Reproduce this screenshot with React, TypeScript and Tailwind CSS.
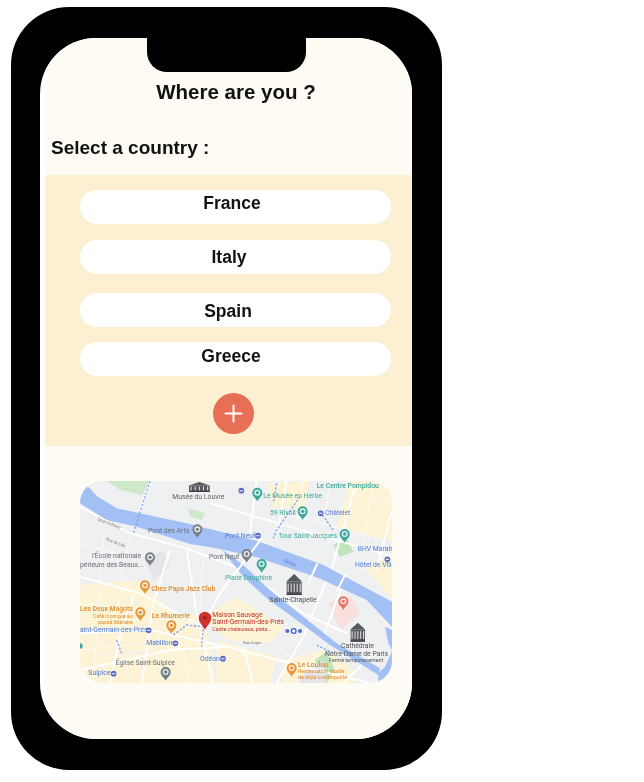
import React from "react";

const font = "font-['Liberation_Sans',Arial,sans-serif]";

const countries = [
  { name: "France", cls: "mt-[15px] pb-[7px] pr-[7px]" },
  { name: "Italy", cls: "mt-[16px] pr-[13px] pt-[1px]" },
  { name: "Spain", cls: "mt-[19px] pr-[15px] pt-[3px]" },
  { name: "Greece", cls: "mt-[15px] pr-[9px] pb-[5px]" },
];

function Pin({ x, y, fill }: { x: number; y: number; fill: string }) {
  return (
    <g transform={`translate(${x} ${y})`}>
      <path d="M0 20 C-3 12 -15 6 -15 -6 A15 15 0 1 1 15 -6 C15 6 3 12 0 20Z" fill={fill} />
      <circle cx="0" cy="-6" r="9" fill="#fff" opacity="0.85" />
      <circle cx="0" cy="-6" r="5" fill={fill} />
    </g>
  );
}

function Metro({ x, y }: { x: number; y: number }) {
  return (
    <g>
      <circle cx={x} cy={y} r="8.5" fill="#5a6ac8" />
      <rect x={x - 5} y={y - 2} width="10" height="4" fill="#fff" opacity="0.75" />
    </g>
  );
}

function Monument({ x, y, w, h }: { x: number; y: number; w: number; h: number }) {
  const bars = [0.1, 0.3, 0.5, 0.7, 0.9];
  return (
    <g>
      <rect x={x} y={y + h * 0.35} width={w} height={h * 0.65} fill="#55585c" />
      <path d={`M${x} ${y + h * 0.35} L${x + w / 2} ${y} L${x + w} ${y + h * 0.35}Z`} fill="#55585c" />
      {bars.map((b) => (
        <rect key={b} x={x + w * b - 1.5} y={y + h * 0.45} width="3" height={h * 0.4} fill="#e8e8ea" />
      ))}
      <rect x={x} y={y + h - 4} width={w} height="4" fill="#3e4145" />
    </g>
  );
}

function MapArt() {
  const roads = [
    "M30 110 L180 190 L350 235 L520 300 L700 430 L830 490",
    "M30 490 L240 480 L470 530 L700 590 L900 639",
    "M300 240 L250 400 L215 639",
    "M350 240 L380 430 L430 639",
    "M575 205 L450 370 L395 470",
    "M855 50 L790 280 L700 500 L620 639",
    "M830 310 L760 500",
    "M30 600 L300 540 L470 530",
    "M30 320 L210 370 L400 470",
    "M240 33 L190 190",
    "M420 100 L970 260",
    "M650 33 L620 190",
    "M966 120 L920 300",
    "M560 33 L540 190",
    "M120 639 L150 500 L190 380",
    "M520 530 L550 639",
    "M820 639 L900 560",
  ];
  const thin = [
    "M30 400 L200 420",
    "M30 540 L210 520",
    "M90 350 L70 639",
    "M160 350 L130 440",
    "M250 440 L380 460",
    "M300 420 L290 639",
    "M340 540 L360 639",
    "M100 200 L90 340",
    "M180 200 L150 330",
    "M30 220 L170 260",
    "M400 250 L390 420",
    "M480 390 L580 500",
    "M560 540 L620 440",
    "M640 130 L900 200",
    "M700 33 L680 150",
    "M780 33 L760 170",
    "M910 33 L880 230",
    "M800 60 L966 100",
    "M700 600 L770 520",
    "M620 540 L760 600",
  ];
  const blocks = [
    "M30 345 L200 330 L300 420 L260 540 L30 560Z",
    "M250 420 L400 440 L440 639 L215 639Z",
    "M30 560 L215 550 L215 639 L30 639Z",
    "M440 510 L620 560 L600 639 L440 639Z",
    "M640 570 L760 540 L850 600 L850 639 L640 639Z",
    "M400 440 L500 380 L640 470 L600 520 L470 510Z",
    "M840 33 L966 33 L966 215 L800 170Z",
    "M590 40 L720 33 L700 120 L610 110Z",
    "M880 290 L966 250 L966 390Z",
  ];
  return (
    <svg viewBox="30 33 936 606" className="block w-[312px] h-[202px] rounded-[22px] blur-[0.4px]" fontFamily="Roboto, 'Liberation Sans', sans-serif">
      <rect x="30" y="33" width="936" height="606" fill="#eff0f2" />
      {blocks.map((d, i) => (
        <path key={i} d={d} fill="#fdf3d6" />
      ))}
      <path d="M110 33 L240 33 L215 75 L150 60Z" fill="#cfe8c8" />
      <path d="M355 115 L405 130 L395 150 L360 140Z" fill="#cfe8c8" />
      <path d="M790 225 L830 205 L850 245 L810 260Z" fill="#bfe3bb" />
      <path d="M770 640 L735 570 L770 545 L795 600Z" fill="#bfe3bb" />
      <path d="M225 270 L280 240 L300 290 L250 330Z" fill="#e3e5e9" />
      <path d="M775 400 L840 378 L872 430 L812 480Z" fill="#f8e0dc" />
      <path d="M690 620 L760 570 L770 639 L690 639Z" fill="#e3e5e9" />
      {thin.map((d, i) => (
        <path key={i} d={d} stroke="#fff" strokeWidth="2.5" fill="none" opacity="0.8" />
      ))}
      {roads.map((d, i) => (
        <path key={i} d={d} stroke="#fff" strokeWidth="6" fill="none" />
      ))}
      <path
        d="M30 50 L55 50 L80 78 L140 115 L350 160 L560 212 L760 285 L890 355 L966 395 L966 470 L890 390 L740 322 L560 262 L440 235 L360 222 L200 170 L110 150 L30 100Z"
        fill="#a3c0f5"
      />
      <path d="M455 238 L520 285 L600 360 L700 440 L800 520 L930 595 L925 615 L780 525 L680 450 L590 385 L520 320Z" fill="#a3c0f5" />
      <path d="M945 470 L966 480 L966 540 L955 520Z" fill="#a3c0f5" />
      <path d="M925 610 L945 590 L966 545 L966 639 L925 639Z" fill="#a3c0f5" />
      <path d="M575 205 L450 370" stroke="#fff" strokeWidth="6" fill="none" />
      <path d="M742 280 L715 340" stroke="#fff" strokeWidth="6" fill="none" />
      <path d="M825 315 L800 365" stroke="#fff" strokeWidth="6" fill="none" />
      <path d="M240 33 L190 190" stroke="#7ea5ee" strokeWidth="4" strokeDasharray="7 5" fill="none" />
      <path d="M690 80 L620 180 L610 205" stroke="#7ea5ee" strokeWidth="4" strokeDasharray="7 5" fill="none" />
      <path d="M750 125 L790 180 M620 40 L610 100" stroke="#7ea5ee" strokeWidth="4" strokeDasharray="7 5" fill="none" />
      <path d="M310 495 L350 465 L400 470 L395 530" stroke="#7ea5ee" strokeWidth="4" strokeDasharray="7 5" fill="none" />
      <path d="M140 510 L155 550 M740 525 L790 550" stroke="#7ea5ee" strokeWidth="4" strokeDasharray="7 5" fill="none" />

      <Monument x={357} y={36} w={62} h={30} />
      <Monument x={650} y={312} w={45} h={63} />
      <Monument x={842} y={458} w={43} h={57} />

      <g fontSize="20.5">
        <text x="307" y="88" fill="#5a5f64">Musée du Louvre</text>
        <text x="234" y="190" fill="#6a6f75">Pont des Arts</text>
        <text x="417" y="266" fill="#6a6f75">Pont Neuf</text>
        <text x="66" y="265" fill="#6a6f75">l'École nationale</text>
        <text x="30" y="291" fill="#6a6f75">périeure des Beaux...</text>
        <text x="598" y="395" fill="#4f5459">Sainte-Chapelle</text>
        <text x="813" y="535" fill="#4f5459">Cathédrale</text>
        <text x="765" y="557" fill="#4f5459">Notre-Dame de Paris</text>
        <text x="777" y="575" fontSize="16" fill="#4f5459">Fermé temporairement</text>
        <text x="137" y="584" fill="#6a6f75">Église Saint-Sulpice</text>
        <text x="465" y="330" fill="#3fa79a">Place Dauphine</text>
        <text x="580" y="83" fill="#3fa79a">Le Musée en Herbe</text>
        <text x="600" y="136" fill="#3fa79a">59 Rivoli</text>
        <text x="625" y="205" fill="#3fa79a">Tour Saint-Jacques</text>
        <text x="740" y="54" fill="#3fa79a" fontWeight="500">Le Centre Pompidou</text>
        <text x="465" y="204" fill="#5a78cc">Pont Neuf</text>
        <text x="765" y="136" fill="#5a78cc">Châtelet</text>
        <text x="863" y="243" fill="#4a7bdc">BHV Marais</text>
        <text x="855" y="292" fill="#4a7bdc">Hôtel de Ville</text>
        <text x="30" y="486" fill="#4a7bdc">aint-Germain-des-Prés</text>
        <text x="229" y="526" fill="#4a7bdc">Mabillon</text>
        <text x="390" y="572" fill="#4a7bdc">Odéon</text>
        <text x="55" y="616" fill="#4a7bdc">Sulpice</text>
        <text x="244" y="362" fill="#e08a2c" fontWeight="500">Chez Papa Jazz Club</text>
        <text x="30" y="423" fill="#e08a2c" fontWeight="500">Les Deux Magots</text>
        <text x="69" y="443" fontSize="16" fill="#e08a2c">Café iconique au</text>
        <text x="84" y="461" fontSize="16" fill="#e08a2c">passé littéraire</text>
        <text x="245" y="445" fill="#e08a2c" fontWeight="500">La Rhumerie</text>
        <text x="684" y="592" fill="#e08a2c" fontWeight="500">Le Loulou</text>
        <text x="684" y="610" fontSize="16" fill="#e08a2c">Restauration rapide</text>
        <text x="684" y="628" fontSize="16" fill="#e08a2c">de style cosmopolite</text>
        <text x="427" y="440" fill="#c5302b">Maison Sauvage</text>
        <text x="427" y="461" fill="#c5302b">Saint-Germain-des-Prés</text>
        <text x="427" y="482" fontSize="16" fill="#c5302b">Cadre chaleureux, plats...</text>
        <text x="640" y="275" fontSize="16" fill="#5a78cc" transform="rotate(22 640 275)">Seine</text>
        <text x="82" y="150" fontSize="13" fill="#777" transform="rotate(22 82 150)">Quai Voltaire</text>
        <text x="108" y="210" fontSize="12" fill="#777" transform="rotate(22 108 210)">Rue de Lille</text>
        <text x="520" y="523" fontSize="12" fill="#777">Rue Suger</text>
      </g>

      <Pin x={562} y={74} fill="#3fa79a" />
      <Pin x={698} y={130} fill="#3fa79a" />
      <Pin x={824} y={198} fill="#3fa79a" />
      <Pin x={575} y={288} fill="#3fa79a" />
      <Pin x={382} y={184} fill="#7d8287" />
      <Pin x={530} y={258} fill="#7d8287" />
      <Pin x={240} y={268} fill="#7d8287" />
      <Pin x={287} y={612} fill="#6d8087" />
      <Pin x={225} y={352} fill="#e8963a" />
      <Pin x={211} y={433} fill="#e8963a" />
      <Pin x={304} y={472} fill="#e8963a" />
      <Pin x={665} y={600} fill="#e8963a" />
      <Pin x={820} y={400} fill="#e8736a" />
      <g transform="translate(405 455) scale(1.25)">
        <path d="M0 20 C-3 10 -15 4 -15 -9 A15 15 0 1 1 15 -9 C15 4 3 10 0 20Z" fill="#d2322d" />
        <circle cx="0" cy="-9" r="5" fill="#a32420" />
      </g>

      <Metro x={514} y={62} />
      <Metro x={752} y={130} />
      <Metro x={564} y={197} />
      <Metro x={952} y={268} />
      <Metro x={236} y={481} />
      <Metro x={316} y={520} />
      <Metro x={459} y={566} />
      <Metro x={131} y={611} />
      <circle cx="671" cy="483" r="9" fill="#2c62dc" />
      <circle cx="671" cy="483" r="5" fill="#fff" />
      <circle cx="652" cy="483" r="6" fill="#5a6ac8" />
      <circle cx="690" cy="483" r="6" fill="#5a6ac8" />
      <circle cx="30" cy="528" r="8" fill="#3fa79a" />
    </svg>
  );
}

export default function App() {
  return (
    <div className={`w-[644px] h-[782px] bg-white pt-[7px] pl-[11px] ${font}`}>
      <div className="w-[431px] h-[763px] bg-black rounded-[58px] pt-[31px] pl-[29px]">
        <div className="relative w-[372px] h-[701px] rounded-[56px] bg-white overflow-hidden blur-[0.3px]">
          <div className="absolute top-0 left-[107px] w-[159px] h-[34px] bg-black rounded-b-[20px]" />
          <div className="ml-[5px] h-full bg-[#fefbf4] flex flex-col">
            <h1 className="pt-[41px] pl-[15px] text-center text-[20.5px] leading-[26px] font-bold text-[#111]">Where are you ?</h1>
            <h2 className="mt-[31px] ml-[6px] text-[19px] leading-[24px] font-bold text-[#111]">Select a country :</h2>
            <div className="mt-[15px] h-[271px] bg-[#fcefd2] flex flex-col items-center pl-[14px]">
              {countries.map((c) => (
                <button
                  key={c.name}
                  className={`w-[311px] h-[34px] rounded-[17px] bg-white flex items-center justify-center text-[17.5px] font-bold text-[#111] ${c.cls}`}
                >
                  {c.name}
                </button>
              ))}
              <button className="mt-[17px] mr-[5px] w-[41px] h-[41px] rounded-full bg-[#e66f56] flex items-center justify-center">
                <svg width="19" height="19" viewBox="0 0 19 19" fill="none" stroke="#fff" strokeWidth="2" strokeLinecap="round">
                  <path d="M9.5 1.5v16M1.5 9.5h16" />
                </svg>
              </button>
            </div>
            <div className="mt-[35px] ml-[35px]">
              <MapArt />
            </div>
          </div>
        </div>
      </div>
    </div>
  );
}
